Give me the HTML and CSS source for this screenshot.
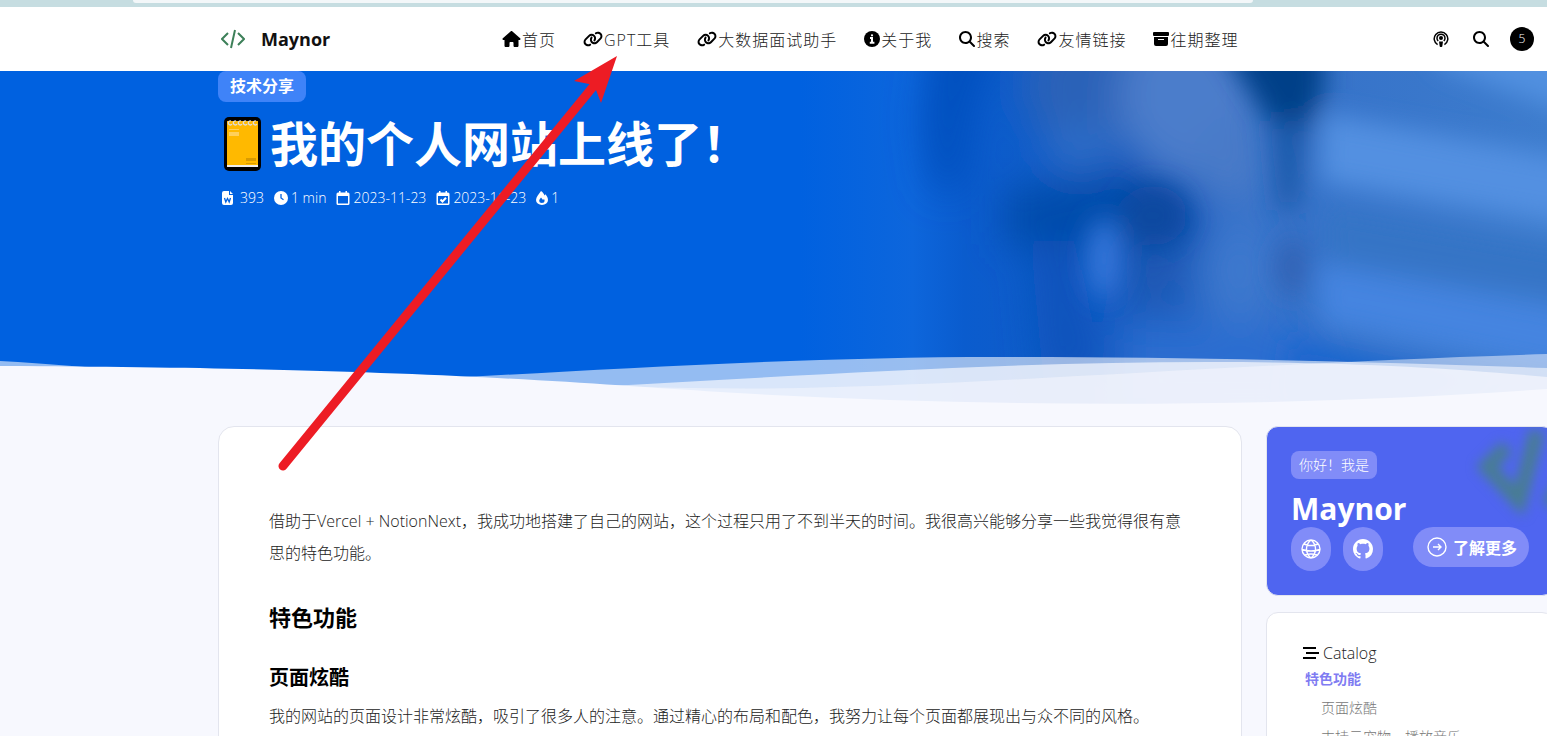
FILE: index.html
```html
<!DOCTYPE html>
<html lang="zh-CN">
<head>
  <meta charset="UTF-8" />
  <meta name="viewport" content="width=device-width, initial-scale=1.0"/>
  <title>我的个人网站上线了！ | Maynor</title>
  <link rel="stylesheet" href="styles.css">
</head>
<body>
  <!-- shared icons -->
  <svg class="sprite" aria-hidden="true">
    <symbol id="i-link" viewBox="0 0 640 512"><path d="M579.8 267.7c56.5-56.5 56.5-148 0-204.5c-50-50-128.8-56.5-186.3-15.4l-1.6 1.1c-14.4 10.3-17.7 30.3-7.4 44.6s30.3 17.7 44.6 7.4l1.6-1.1c32.1-22.9 76-19.3 103.8 8.6c31.5 31.5 31.5 82.5 0 114L422.3 334.8c-31.5 31.5-82.5 31.5-114 0c-27.9-27.9-31.5-71.8-8.6-103.8l1.1-1.6c10.3-14.4 6.9-34.4-7.4-44.6s-34.4-6.9-44.6 7.4l-1.1 1.6C206.5 251.2 213 330 263 380c56.5 56.5 148 56.5 204.5 0L579.8 267.7zM60.2 244.3c-56.5 56.5-56.5 148 0 204.5c50 50 128.8 56.5 186.3 15.4l1.6-1.1c14.4-10.3 17.7-30.3 7.4-44.6s-30.3-17.7-44.6-7.4l-1.6 1.1c-32.1 22.9-76 19.3-103.8-8.6C74 372 74 321 105.5 289.5L217.7 177.2c31.5-31.5 82.5-31.5 114 0c27.9 27.9 31.5 71.8 8.6 103.9l-1.1 1.6c-10.3 14.4-6.9 34.4 7.4 44.6s34.4 6.9 44.6-7.4l1.1-1.6C433.5 260.8 427 182 377 132c-56.5-56.5-148-56.5-204.5 0L60.2 244.3z"/></symbol>
    <symbol id="i-search" viewBox="0 0 512 512"><path d="M416 208c0 45.9-14.9 88.3-40 122.7L502.6 457.4c12.5 12.5 12.5 32.8 0 45.3s-32.8 12.5-45.3 0L330.7 376c-34.4 25.2-76.8 40-122.7 40C93.1 416 0 322.9 0 208S93.1 0 208 0S416 93.1 416 208zM208 352a144 144 0 1 0 0-288 144 144 0 1 0 0 288z"/></symbol>
  </svg>

  <div class="page">
    <div class="browser-strip"><div class="address-bar"></div></div>

    <header class="header">
      <a class="brand" href="#">
        <svg class="brand-logo" viewBox="0 0 24 20"><path d="M7 4L1 10l6 6M17 4l6 6-6 6M14 1l-4 18"/></svg>
        <span>Maynor</span>
      </a>
      <nav class="menu">
        <a href="#"><svg class="icon wide" viewBox="0 0 576 512"><path d="M575.8 255.5c0 18-15 32.1-32 32.1h-32l.7 160.2c0 2.7-.2 5.4-.5 8.1V472c0 22.1-17.9 40-40 40H456c-1.1 0-2.2 0-3.3-.1c-1.4 .1-2.8 .1-4.2 .1H416 392c-22.1 0-40-17.9-40-40V448 384c0-17.7-14.3-32-32-32H256c-17.7 0-32 14.3-32 32v64 24c0 22.1-17.9 40-40 40H160 128.1c-1.5 0-3-.1-4.5-.2c-1.2 .1-2.4 .2-3.6 .2H104c-22.1 0-40-17.9-40-40V360c0-.9 0-1.9 .1-2.8V287.6H32c-18 0-32-14-32-32.1c0-9 3-17 10-24L266.4 8c7-7 15-8 22-8s15 2 21 7L564.8 231.5c8 7 12 15 11 24z"/></svg><span>首页</span></a>
        <a href="#"><svg class="icon wider"><use href="#i-link"/></svg><span>GPT工具</span></a>
        <a href="#"><svg class="icon wider"><use href="#i-link"/></svg><span>大数据面试助手</span></a>
        <a href="#"><svg class="icon" viewBox="0 0 16 16"><circle cx="8" cy="8" r="8"/><path class="knock" d="M6 7h2v4.5M5.8 11.8h4.6"/><circle class="knock-dot" cx="8" cy="4.3" r="1.1"/></svg><span>关于我</span></a>
        <a href="#"><svg class="icon"><use href="#i-search"/></svg><span>搜索</span></a>
        <a href="#"><svg class="icon wider"><use href="#i-link"/></svg><span>友情链接</span></a>
        <a href="#"><svg class="icon" viewBox="0 0 16 16"><path fill-rule="evenodd" d="M1 1h14a1 1 0 0 1 1 1v2a1 1 0 0 1-1 1H1a1 1 0 0 1-1-1V2a1 1 0 0 1 1-1zM1 6h14v7a2 2 0 0 1-2 2H3a2 2 0 0 1-2-2zM5 8v1h6V8z"/></svg><span>往期整理</span></a>
      </nav>
      <div class="tools">
        <button type="button" aria-label="播客"><svg class="icon" viewBox="0 0 16 16"><path class="line" d="M4.6 13.7A6.8 6.8 0 1 1 11.4 13.7M5.2 10A4 4 0 1 1 10.8 10"/><circle cx="8" cy="7" r="2"/><path d="M6 10.5h4l-.7 4.7q-.1.8-.8.8h-1q-.7 0-.8-.8z"/></svg></button>
        <button type="button" aria-label="搜索"><svg class="icon"><use href="#i-search"/></svg></button>
        <span class="count">5</span>
      </div>
    </header>

    <section class="hero">
      <!-- blurred cover photo -->
      <svg class="cover" viewBox="800 70 747 340" preserveAspectRatio="none">
        <defs>
          <filter id="soft" x="-30%" y="-30%" width="160%" height="160%"><feGaussianBlur stdDeviation="19"/></filter>
          <filter id="mid" x="-50%" y="-50%" width="200%" height="200%"><feGaussianBlur stdDeviation="13"/></filter>
          <linearGradient id="base"><stop offset="0" stop-color="#0061e0"/><stop offset="0.15" stop-color="#0d66dc"/><stop offset="0.22" stop-color="#0a5cce"/><stop offset="0.45" stop-color="#165bc1"/><stop offset="0.6" stop-color="#3470c8"/><stop offset="1" stop-color="#3d7ccd"/></linearGradient>
        </defs>
        <rect x="800" y="70" width="747" height="340" fill="url(#base)"/>
        <g filter="url(#soft)">
          <path fill="#004fbe" d="M938 10h70l-35 100-10 80h-30l-10-70z"/>
          <ellipse cx="1090" cy="85" rx="66" ry="66" fill="#2b62b8"/>
          <ellipse cx="1190" cy="95" rx="72" ry="84" fill="#4c7dcb"/>
          <ellipse cx="1080" cy="146" rx="34" ry="24" fill="#2f6dc8"/>
          <ellipse cx="1230" cy="160" rx="36" ry="44" fill="#4a7ac8"/>
          <path fill="#014cab" d="M1005 190l130-22 55 25 5 55-60 20-80-15-50-10z"/>
          <path fill="#0852bc" d="M1030 240h44l30 130-60 20z"/>
          <ellipse cx="1155" cy="270" rx="30" ry="46" fill="#1a59b4"/>
          <ellipse cx="1240" cy="270" rx="36" ry="54" fill="#3e78ce"/>
          <path fill="#2a6dd0" d="M1120 322h190l40 100h-230z"/>
        </g>
        <g filter="url(#mid)">
          <path fill="#5190e0" d="M1430 40h160v80l-150-55z"/>
          <path fill="#5290e1" d="M1322 112l260 48v66l-262-45z"/>
          <path fill="#3474c6" d="M1325 205l260 45v55l-255-45z"/>
          <path fill="#4484e0" d="M1316 262l260 48v64l-255-50z"/>
          <path fill="#1b66ce" d="M1290 338l210 40-100 30h-120z"/>
          <path fill="#033f88" d="M1212 30h112v60l-18 46-22 10-24-40z"/>
          <path fill="#1c5aaa" d="M1270 120h38l-10 90h-20z"/>
          <ellipse cx="1153" cy="215" rx="34" ry="30" fill="#0c4aa0"/>
          <ellipse cx="1104" cy="258" rx="18" ry="40" fill="#3576da"/>
          <ellipse cx="1292" cy="266" rx="16" ry="30" fill="#3062b4"/>
        </g>
      </svg>

      <div class="hero-text">
        <a class="tag" href="#">技术分享</a>
        <h1 class="title">
          <svg class="notebook" viewBox="0 0 40 56"><rect x="2" y="1" width="37" height="54" rx="5" fill="#000"/><path fill="#ffb900" d="M5 5h31v45H5z"/><path fill="#eee" d="M5 49h31v2H5z"/><path fill="#ffd05a" d="M7 13h10v1H7zM7 16h10v4H7z"/><path fill="#d99b00" d="M24 42h10v3H24zM24 47h10v1H24z"/><path fill="none" stroke="#ddd" stroke-width="1.3" d="M9 5a2 2 0 1 0 1 3M14 5a2 2 0 1 0 1 3M19 5a2 2 0 1 0 1 3M24 5a2 2 0 1 0 1 3M29 5a2 2 0 1 0 1 3M34 5a2 2 0 1 0 1 3"/></svg>
          <span>我的个人网站上线了！</span>
        </h1>
        <div class="meta">
          <span class="words"><svg viewBox="0 0 12 14"><path d="M2 0h5v4h4v8a2 2 0 0 1-2 2H2a2 2 0 0 1-2-2V2a2 2 0 0 1 2-2zM8 0l3 3H8z"/><path class="mark" d="M2.5 7l1.3 4L5.5 7.5 7.2 11 8.500 7"/></svg>393</span>
          <span><svg viewBox="0 0 14 14"><circle cx="7" cy="7" r="7"/><path class="mark" d="M7 3v4l2.5 1.700"/></svg>1 min</span>
          <span><svg viewBox="0 0 14 14"><path fill-rule="evenodd" d="M3 0h1.500v1.500h5V0H11v1.500h1a1.500 1.500 0 0 1 1.500 1.500v9.500A1.500 1.500 0 0 1 12 14H2A1.500 1.500 0 0 1 .5 12.500V3A1.500 1.500 0 0 1 2 1.500h1zM2 5v7.500h10V5z"/></svg>2023-11-23</span>
          <span><svg viewBox="0 0 14 14"><path fill-rule="evenodd" d="M3 0h1.500v1.500h5V0H11v1.500h1a1.500 1.500 0 0 1 1.500 1.500v9.500A1.500 1.500 0 0 1 12 14H2A1.500 1.500 0 0 1 .5 12.500V3A1.500 1.500 0 0 1 2 1.500h1zM2 5v7.500h10V5z"/><path class="tick" d="M4.500 8.500l2 2 3.500-3.700"/></svg>2023-11-23</span>
          <span><svg viewBox="0 0 12 14"><path fill-rule="evenodd" d="M5 0c2 1.500 3 3 3.500 4.400L9.500 3.200C11 5 12 7 12 9a6 5 0 0 1-12 0C0 6 3 3 5 0zM5 6.500C4 8 3.200 8.800 3.200 10a2.700 2 0 0 0 5.400 0c0-.8-.2-1.300-.6-1.900l-1 1z"/></svg>1</span>
        </div>
      </div>

      <svg class="waves" viewBox="0 0 1547 60" preserveAspectRatio="none">
        <path opacity=".6" d="M0 11C120 18 200 30 320 32C470 31 720 7 1000 7C1200 7 1380 12 1547 18V60H0z"/>
        <path opacity=".7" d="M0 16C200 20 400 45 520 40C720 32 960 12 1210 12C1350 12 1450 18 1547 27V60H0z"/>
        <path opacity=".5" d="M0 16C300 20 600 42 800 38C1000 34 1250 13 1547 4V60H0z"/>
        <path d="M0 16C420 18 560 32 720 42C1000 59 1300 57 1547 39V60H0z"/>
      </svg>
    </section>

    <main class="content">
      <article class="post">
        <p>借助于Vercel + NotionNext，我成功地搭建了自己的网站，这个过程只用了不到半天的时间。我很高兴能够分享一些我觉得很有意思的特色功能。</p>
        <h2>特色功能</h2>
        <h3>页面炫酷</h3>
        <p>我的网站的页面设计非常炫酷，吸引了很多人的注意。通过精心的布局和配色，我努力让每个页面都展现出与众不同的风格。</p>
      </article>

      <aside class="sidebar">
        <div class="profile">
          <svg class="profile-logo" viewBox="0 0 120 100"><path d="M34 20L14 40l32 34L64 4M96 48L76 78"/></svg>
          <div class="hello">你好！我是</div>
          <div class="name">Maynor</div>
          <div class="actions">
            <a class="round" href="#" aria-label="网站"><svg viewBox="0 0 20 20"><path class="stroke" d="M10 1a9 9 0 1 0 0 18a9 9 0 1 0 0-18zM10 1c-6 5-6 13 0 18M10 1c6 5 6 13 0 18M3 5q7 3 14 0M1 10.500q9 3 18 0M4 16q6-2 12 0"/></svg></a>
            <a class="round" href="#" aria-label="GitHub"><svg viewBox="0 0 16 16"><path d="M8 0C3.58 0 0 3.58 0 8c0 3.54 2.29 6.53 5.47 7.59.4.07.55-.17.55-.38 0-.19-.01-.82-.01-1.49-2.01.37-2.53-.49-2.69-.94-.09-.23-.48-.94-.82-1.13-.28-.15-.68-.52-.01-.53.63-.01 1.08.58 1.23.82.72 1.21 1.87.87 2.33.66.07-.52.28-.87.51-1.07-1.78-.2-3.64-.89-3.64-3.95 0-.87.31-1.59.82-2.15-.08-.2-.36-1.02.08-2.12 0 0 .67-.21 2.2.82.64-.18 1.32-.27 2-.27s1.36.09 2 .27c1.53-1.04 2.2-.82 2.2-.82.44 1.1.16 1.92.08 2.12.51.56.82 1.27.82 2.15 0 3.07-1.87 3.75-3.65 3.95.29.25.54.73.54 1.48 0 1.07-.01 1.93-.01 2.2 0 .21.15.46.55.38A8.01 8.01 0 0 0 16 8c0-4.42-3.58-8-8-8z"/></svg></a>
            <button class="more" type="button"><svg viewBox="0 0 20 20"><path class="stroke" d="M10 1a9 9 0 1 0 0 18a9 9 0 1 0 0-18zM6 10h8M11 7l3 3-3 3"/></svg>了解更多</button>
          </div>
        </div>

        <nav class="catalog">
          <div class="catalog-title"><svg viewBox="0 0 16 14"><path d="M0 2h13M3 7h13M0 12h13"/></svg>Catalog</div>
          <a class="active" href="#">特色功能</a>
          <a class="sub" href="#">页面炫酷</a>
          <a class="sub" href="#">支持云宠物、播放音乐</a>
        </nav>
      </aside>
    </main>

    <!-- arrow pointing at the GPT menu item -->
    <svg class="arrow" viewBox="0 0 345 420"><path d="M8 412L317 34" stroke="#ed1c24" stroke-width="9" stroke-linecap="round"/><path fill="#ed1c24" d="M342 2l-43 25 15 3 7 6 5 13z"/></svg>
  </div>
</body>
</html>
```
FILE: styles.css
```css
* {
  box-sizing: border-box;
}
body {
  margin: 0;
  font-family: "Open Sans", "Noto Sans CJK SC", sans-serif;
  font-size: 16px;
  font-weight: 300;
  color: #222;
  background: #f7f8fe;
}
a {
  color: inherit;
  text-decoration: none;
}
button {
  border: none;
  padding: 0;
  background: none;
  font: inherit;
  color: inherit;
  cursor: pointer;
}
.sprite {
  position: absolute;
  width: 0;
  height: 0;
}
.page {
  position: relative;
  height: 100vh;
  overflow: hidden;
}
.browser-strip {
  height: 7px;
  padding: 0 294px 0 133px;
  background: #c6dde1;
}
.address-bar {
  height: 3px;
  background: #f3f7f9;
  border-radius: 0 0 12px 12px;
}

/* header */
.header {
  display: flex;
  align-items: center;
  height: 64px;
  padding: 0 13px 0 221px;
  background: #fff;
}
.brand {
  display: flex;
  align-items: center;
  gap: 16px;
  width: 281px;
  font-size: 18px;
  font-weight: 700;
  color: #111;
}
.brand-logo {
  width: 24px;
  height: 20px;
  fill: none;
  stroke: #3d8059;
  stroke-width: 2;
}
.menu {
  display: flex;
  gap: 27px;
  letter-spacing: 1px;
}
.menu a {
  display: flex;
  align-items: center;
  gap: 1px;
  white-space: nowrap;
}
.icon {
  width: 16px;
  height: 16px;
  fill: #000;
}
.icon.wide {
  width: 19px;
}
.icon.wider {
  width: 20px;
}
.icon .knock {
  fill: none;
  stroke: #fff;
  stroke-width: 2;
}
.icon .knock-dot {
  fill: #fff;
}
.icon .line {
  fill: none;
  stroke: #000;
  stroke-width: 1.5;
}
.tools {
  display: flex;
  align-items: center;
  gap: 18px;
  margin-left: auto;
}
.tools button {
  display: flex;
  justify-content: center;
  width: 22px;
}
.count {
  width: 24px;
  line-height: 24px;
  border-radius: 50%;
  background: #000;
  color: #fff;
  font-size: 12px;
  text-align: center;
}

/* hero */
.hero {
  position: relative;
  height: 339px;
  background: #0061e0;
  color: #fff;
}
.cover {
  position: absolute;
  top: 0;
  right: 0;
  width: 48.3%;
  height: 100%;
}
.hero-text {
  position: relative;
  padding-left: 218px;
}
.tag {
  display: inline-block;
  padding: 0 12px;
  border-radius: 8px;
  background: #3f83f8;
  font-weight: 700;
  line-height: 31px;
  vertical-align: top;
}
.title {
  display: flex;
  align-items: center;
  gap: 8px;
  margin: 8px 0 0 4px;
  font-size: 48px;
  font-weight: 700;
  line-height: 68px;
  white-space: nowrap;
}
.notebook {
  width: 40px;
  height: 56px;
}
.meta {
  display: flex;
  align-items: center;
  gap: 10px;
  margin: 10px 0 0 4px;
  font-size: 14px;
  line-height: 20px;
}
.meta span {
  display: flex;
  align-items: center;
  gap: 3px;
}
.meta .words {
  gap: 6px;
}
.meta svg {
  height: 14px;
  fill: #fff;
}
.meta .mark,
.meta .tick {
  fill: none;
  stroke: #0061e0;
  stroke-width: 1.3;
}
.meta .tick {
  stroke: #fff;
  stroke-width: 2;
}
.waves {
  position: absolute;
  left: 0;
  bottom: 0;
  width: 100%;
  height: 60px;
  fill: #f7f8fe;
}

/* content */
.content {
  display: flex;
  align-items: flex-start;
  gap: 24px;
  margin-right: -7px;
  padding: 16px 0 0 218px;
}
.post {
  flex: 1;
  padding: 78px 50px 50px;
  border: 1px solid #e3e5ee;
  border-radius: 16px;
  background: #fff;
}
.post p {
  margin: 0;
  line-height: 32px;
}
.post h2,
.post h3 {
  color: #000;
  font-weight: 700;
}
.post h2 {
  margin: 32px 0 30px;
  font-size: 22px;
  line-height: 32px;
}
.post h3 {
  margin: 0 0 7px;
  font-size: 20px;
  line-height: 30px;
}
.sidebar {
  width: 288px;
  flex: none;
}
.profile {
  position: relative;
  overflow: hidden;
  padding: 24px;
  border: 1px solid #e3e5ee;
  border-radius: 12px;
  background: #4f65f0;
  color: #fff;
}
.profile-logo {
  position: absolute;
  top: 0;
  right: -40px;
  width: 120px;
  height: 100px;
  fill: none;
  stroke: #487d92;
  stroke-width: 15;
  filter: blur(6px);
}
.hello {
  display: inline-block;
  padding: 0 8px;
  border-radius: 8px;
  background: #818cf8;
  font-size: 14px;
  line-height: 28px;
  vertical-align: top;
}
.name {
  margin-top: 12px;
  font-size: 30px;
  font-weight: 700;
  line-height: 36px;
}
.actions {
  display: flex;
  align-items: flex-start;
  gap: 12px;
}
.round,
.more {
  display: flex;
  align-items: center;
  justify-content: center;
  border-radius: 20px;
  background: #818cf8;
}
.round {
  width: 40px;
  height: 44px;
}
.more {
  gap: 6px;
  height: 40px;
  margin-left: auto;
  padding: 0 12px 0 14px;
  font-weight: 700;
}
.actions svg {
  width: 20px;
  height: 20px;
  fill: #fff;
}
.actions .stroke {
  fill: none;
  stroke: #fff;
  stroke-width: 1.4;
}
.catalog {
  display: flex;
  flex-direction: column;
  margin-top: 16px;
  padding: 29px 36px;
  border: 1px solid #e3e5ee;
  border-radius: 12px;
  background: #fff;
  color: #777;
  font-size: 14px;
  line-height: 29px;
}
.catalog-title {
  display: flex;
  align-items: center;
  gap: 4px;
  color: #222;
  font-size: 16px;
  line-height: 22px;
}
.catalog-title svg {
  width: 16px;
  height: 14px;
  stroke: #000;
  stroke-width: 2;
}
.catalog .active {
  padding-left: 2px;
  color: #807cf2;
  font-weight: 700;
}
.catalog .sub {
  padding-left: 18px;
}

/* arrow */
.arrow {
  position: absolute;
  top: 54px;
  left: 275px;
  width: 345px;
  height: 420px;
}
```
